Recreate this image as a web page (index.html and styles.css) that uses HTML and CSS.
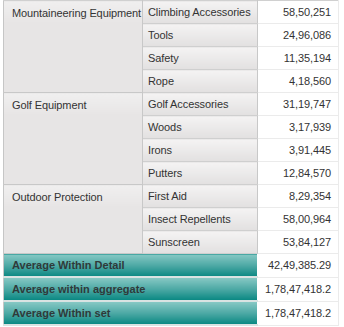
FILE: index.html
```html
<!DOCTYPE html>
<html>
<head>
<meta charset="utf-8">
<link rel="stylesheet" href="styles.css">
</head>
<body>
<table class="pivot">
  <colgroup>
    <col class="c1">
    <col class="c2">
    <col class="c3">
  </colgroup>
  <tbody>
    <tr>
      <td class="grp" rowspan="4">Mountaineering Equipment</td>
      <td class="sub">Climbing Accessories</td>
      <td class="val">58,50,251</td>
    </tr>
    <tr><td class="sub">Tools</td><td class="val">24,96,086</td></tr>
    <tr><td class="sub">Safety</td><td class="val">11,35,194</td></tr>
    <tr><td class="sub">Rope</td><td class="val">4,18,560</td></tr>
    <tr>
      <td class="grp" rowspan="4">Golf Equipment</td>
      <td class="sub">Golf Accessories</td>
      <td class="val">31,19,747</td>
    </tr>
    <tr><td class="sub">Woods</td><td class="val">3,17,939</td></tr>
    <tr><td class="sub">Irons</td><td class="val">3,91,445</td></tr>
    <tr><td class="sub">Putters</td><td class="val">12,84,570</td></tr>
    <tr>
      <td class="grp" rowspan="3">Outdoor Protection</td>
      <td class="sub">First Aid</td>
      <td class="val">8,29,354</td>
    </tr>
    <tr><td class="sub">Insect Repellents</td><td class="val">58,00,964</td></tr>
    <tr><td class="sub">Sunscreen</td><td class="val">53,84,127</td></tr>
    <tr class="sum first">
      <td class="label" colspan="2">Average Within Detail</td>
      <td class="val">42,49,385.29</td>
    </tr>
    <tr class="sum">
      <td class="label" colspan="2">Average within aggregate</td>
      <td class="val">1,78,47,418.2</td>
    </tr>
    <tr class="sum">
      <td class="label" colspan="2">Average Within set</td>
      <td class="val">1,78,47,418.2</td>
    </tr>
  </tbody>
</table>
</body>
</html>
```

FILE: styles.css
```css
html, body {
  margin: 0;
  padding: 0;
  background: #ffffff;
}

.pivot {
  margin-left: 3px;
  width: 336px;
  table-layout: fixed;
  border-collapse: collapse;
  font-family: "Liberation Sans", Arial, sans-serif;
  font-size: 11px;
  letter-spacing: -0.1px;
  color: #333333;
  border-left: 1px solid #c6c6c6;
  border-top: 1px solid #d0d0d0;
}

.c1 { width: 139px; }
.c2 { width: 115px; }
.c3 { width: 81px; }

.pivot td {
  height: 22px;
  padding: 0;
  white-space: nowrap;
  overflow: hidden;
}

.grp {
  vertical-align: top;
  padding: 6px 0 0 8px !important;
  background: linear-gradient(#f0efef, #e7e5e5 22px, #e7e5e5);
  border-bottom: 1px solid #c8c8c8;
  border-right: 1px solid #c8c8c8;
}

.sub {
  padding-left: 5px !important;
  background: linear-gradient(#f4f3f3, #e2e0e0);
  border-bottom: 1px solid #cfcfcf;
  border-right: 1px solid #c8c8c8;
  vertical-align: middle;
}

.val {
  text-align: right;
  padding-right: 7px !important;
  background: #ffffff;
  border-bottom: 1px solid #ebebeb;
  border-right: 1px solid #ebebeb;
  vertical-align: middle;
}

.sum .label {
  font-weight: bold;
  letter-spacing: 0;
  padding-left: 8px !important;
  background: linear-gradient(#86c8c4, #4ea9a5 50%, #0b8883);
  border-bottom: 2px solid #d9e3e2;
  border-right: 1px solid #ffffff;
  color: #2f3a3a;
}

.sum.first .label {
  border-top: 1px solid #c9d6d5;
}

.sum .val {
  border-bottom: 1px solid #ebebeb;
}
```
